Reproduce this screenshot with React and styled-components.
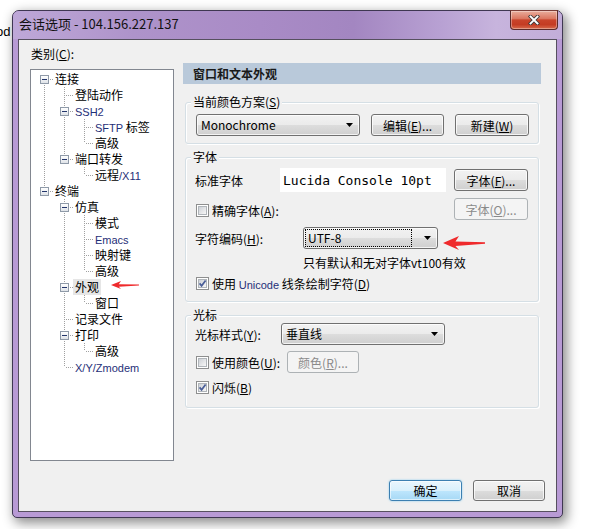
import React from 'react';
import styled, { createGlobalStyle, css } from 'styled-components';

const Global = createGlobalStyle`
  html, body { margin: 0; padding: 0; background: #fff; }
  body {
    font-family: "Noto Sans CJK SC", "Liberation Sans", sans-serif;
    font-size: 12px;
    color: #000;
  }
  * { box-sizing: border-box; }
`;

const Desktop = styled.div`
  position: relative;
  width: 590px;
  height: 529px;
  overflow: hidden;
  padding: 10px 0 0 12px;
`;

const BehindText = styled.span`
  position: absolute;
  left: -4px;
  top: 24px;
  font-family: "Liberation Sans", sans-serif;
  font-size: 13px;
  line-height: 15px;
`;

const Window = styled.div`
  position: relative;
  width: 551px;
  height: 508px;
  display: flex;
  flex-direction: column;
  border: 1px solid #3f3752;
  border-radius: 7px 7px 5px 5px;
  background: #b89ad5;
  padding: 0 5px 5px;
  box-shadow: 3px 4px 12px 1px rgba(0, 0, 0, 0.45);
`;

const TitleBar = styled.div`
  height: 28px;
  margin: 0 -5px;
  padding: 0 4px 0 6px;
  display: flex;
  align-items: flex-start;
  border-radius: 6px 6px 0 0;
  background: linear-gradient(90deg, #bea8d8 0%, #ae93ca 22%, #a98bc6 45%, #a386c1 62%, #b8a1d3 78%, #c7b4dd 88%, #c2add9 100%);
`;

const Title = styled.div`
  padding-top: 5px;
  line-height: 16px;
  font-size: 13px;
  color: #111;
`;

const CloseBtn = styled.div`
  margin: -1px 0 0 auto;
  width: 48px;
  height: 20px;
  border: 1px solid #5a2b2a;
  border-top-color: #7a3d38;
  border-radius: 0 0 4px 4px;
  background: linear-gradient(#e9ae9d 0%, #db7761 42%, #c9442b 50%, #c43c23 75%, #d76a4c 100%);
  box-shadow: inset 0 0 0 1px rgba(255, 255, 255, 0.35);
  display: flex;
  align-items: center;
  justify-content: center;
`;

const Client = styled.div`
  flex: 1;
  display: flex;
  flex-direction: column;
  background: #f0f0f0;
  border: 1px solid #56505f;
`;

const Main = styled.div`
  display: flex;
  gap: 9px;
  padding: 0 15px 0 11px;
`;

const LeftCol = styled.div`
  width: 144px;
  flex: none;
  padding-top: 6px;
  display: flex;
  flex-direction: column;
`;

const CatLabel = styled.div`
  line-height: 16px;
  padding-left: 1px;
`;

const Tree = styled.div`
  margin-top: 7px;
  height: 392px;
  border: 1px solid #828790;
  background: #fff;
  padding: 1px 0 0 3px;
`;

const dots = (dir, x, y, w, h) =>
  `repeating-linear-gradient(${dir}, #a0a0a0 0 1px, transparent 1px 2px) ${x} ${y} / ${w} ${h} no-repeat`;

const TreeRow = styled.div`
  display: flex;
  align-items: center;
  height: 16px;
  white-space: nowrap;
`;

const Guide = styled.span`
  flex: 0 0 20px;
  height: 16px;
  background: ${(p) => (p.$line ? dots('to bottom', '10px', '0', '1px', '16px') : 'none')};
`;

const Conn = styled.span`
  flex: 0 0 19px;
  height: 16px;
  display: flex;
  align-items: flex-start;
  padding: 4px 0 0 6px;
  background: ${(p) =>
    [
      p.$top && dots('to bottom', '10px', '0', '1px', '8px'),
      p.$bottom && dots('to bottom', '10px', '8px', '1px', '8px'),
      dots('to right', '12px', '8px', '7px', '1px'),
    ]
      .filter(Boolean)
      .join(', ')};
`;

const Expander = styled.span`
  width: 9px;
  height: 9px;
  border: 1px solid #8f9aa8;
  background: linear-gradient(#ffffff, #dfe3e8);
  display: flex;
  align-items: center;
  justify-content: center;
  &::before {
    content: '';
    width: 5px;
    height: 1px;
    background: #23356b;
  }
`;

const NodeLabel = styled.span`
  padding: 0 2px;
  height: 16px;
  line-height: 16px;
  background: ${(p) => (p.$sel ? '#e6e6e6' : 'transparent')};
`;

const Latin = styled.span`
  color: #1f2f78;
  font-family: "Liberation Sans", sans-serif;
  font-size: 11px;
`;

const ArrowSvg = styled.svg`
  flex: none;
  display: block;
  margin: ${(p) => p.$m || 0};
`;

const RightCol = styled.div`
  width: 358px;
  flex: none;
  padding-top: 23px;
`;

const Header = styled.div`
  height: 21px;
  line-height: 21px;
  padding-left: 10px;
  background: #b9c9da;
  font-weight: bold;
  color: #1a1a1a;
`;

const Group = styled.div`
  margin: ${(p) => p.$mt}px 2px 0;
  border: 1px solid #d5dfe5;
  border-radius: 3px;
  box-shadow: inset 1px 1px 0 #fff, 1px 1px 0 #fff;
`;

const Legend = styled.div`
  width: fit-content;
  margin: -9px 0 0 5px;
  padding: 0 2px;
  line-height: 16px;
  background: #f0f0f0;
`;

const GroupBody = styled.div`
  display: flex;
  flex-direction: ${(p) => p.$dir || 'column'};
  gap: ${(p) => p.$gap || 0}px;
  padding: ${(p) => p.$pad};
`;

const FormRow = styled.div`
  display: flex;
  align-items: ${(p) => p.$align || 'center'};
  height: ${(p) => p.$h}px;
  margin-top: ${(p) => p.$mt || 0}px;
  padding-left: ${(p) => p.$pl || 0}px;
  white-space: nowrap;
`;

const FieldLabel = styled.span`
  flex: none;
  width: ${(p) => p.$w}px;
`;

const btnFace = css`
  border: 1px solid #707070;
  border-radius: 3px;
  background: linear-gradient(#f2f2f2 0%, #ebebeb 50%, #dddddd 50%, #cfcfcf 100%);
  box-shadow: inset 0 0 0 1px rgba(255, 255, 255, 0.75);
`;

const Button = styled.button`
  font: inherit;
  color: #000;
  flex: none;
  width: ${(p) => p.$w}px;
  height: ${(p) => p.$h || 22}px;
  margin-left: ${(p) => (p.$auto ? 'auto' : '0')};
  padding: 0;
  display: flex;
  align-items: center;
  justify-content: center;
  ${btnFace}
  ${(p) =>
    p.$primary &&
    css`
      border-color: #3c7fb1;
      background: linear-gradient(#eaf6fd 0%, #d9f0fc 50%, #bee6fd 50%, #a7d9f5 100%);
      box-shadow: inset 0 0 0 1px rgba(255, 255, 255, 0.6), 0 0 2px #7cc7ee;
    `}
  &:disabled {
    color: #8a8a8a;
    border-color: #adb2b5;
    background: #f4f4f4;
    box-shadow: none;
  }
`;

const Select = styled.div`
  flex: none;
  width: ${(p) => p.$w}px;
  height: 22px;
  display: flex;
  align-items: center;
  padding: 0 6px 0 1px;
  ${btnFace}
`;

const SelectText = styled.span`
  flex: 1;
  height: 18px;
  line-height: 16px;
  padding-left: 2px;
  margin-right: ${(p) => (p.$focus ? 12 : 4)}px;
  border: 1px ${(p) => (p.$focus ? 'dotted #000' : 'solid transparent')};
`;

const FontBox = styled.div`
  flex: none;
  width: 166px;
  height: 24px;
  background: #fff;
  padding-left: 3px;
  display: flex;
  align-items: center;
  font-family: "DejaVu Sans Mono", "Liberation Mono", monospace;
  font-size: 13px;
`;

const CheckField = styled.label`
  display: flex;
  align-items: center;
  gap: 3px;
  flex: none;
  width: ${(p) => (p.$w ? `${p.$w}px` : 'auto')};
  margin: 0 0 ${(p) => p.$mb || 0}px 1px;
`;

const Box = styled.span`
  flex: none;
  width: 13px;
  height: 13px;
  border: 1px solid #8e8f8f;
  background: #fff;
  padding: 1px;
  display: flex;
`;

const BoxInner = styled.span`
  flex: 1;
  display: flex;
  border: 1px solid #b0b5ba;
  background: linear-gradient(135deg, #cdd1d6 0%, #e7e8ea 60%, #f7f7f7 100%);
  & > svg {
    margin: -1px;
    flex: none;
  }
`;

const Hint = styled.span``;

const Footer = styled.div`
  margin-top: auto;
  display: flex;
  justify-content: flex-end;
  gap: 11px;
  padding: 0 11px 10px 0;
`;

const Caret = () => (
  <svg width="7" height="4" viewBox="0 0 7 4" style={{ flex: 'none' }}>
    <path d="M0 0 H7 L3.5 4 Z" fill="#000" />
  </svg>
);

const RedArrow = ({ w, h, head, m }) => {
  const c = h / 2;
  return (
    <ArrowSvg width={w} height={h} viewBox={`0 0 ${w} ${h}`} $m={m}>
      <path
        d={`M0 ${c} L${head} 0 L${head * 0.78} ${c - h * 0.1} L${w} ${c - h * 0.06} L${w} ${c + h * 0.06} L${head * 0.78} ${c + h * 0.22} L${head} ${h} Z`}
        fill="#ef2a2c"
      />
    </ArrowSvg>
  );
};

const Check = ({ checked }) => (
  <Box>
    <BoxInner>
      {checked && (
        <svg width="9" height="9" viewBox="0 0 9 9">
          <path d="M1.6 4.4 L3.6 6.8 L7.6 1.4" fill="none" stroke="#4a5e98" strokeWidth="1.7" />
        </svg>
      )}
    </BoxInner>
  </Box>
);

const withLatin = (s) =>
  s.split(/([A-Za-z0-9/]+)/).map((part, i) =>
    /[A-Za-z0-9]/.test(part) ? <Latin key={i}>{part}</Latin> : <React.Fragment key={i}>{part}</React.Fragment>
  );

const items = [
  { l: 0, t: '连接', exp: true },
  { l: 1, t: '登陆动作' },
  { l: 1, t: 'SSH2', exp: true },
  { l: 2, t: 'SFTP 标签' },
  { l: 2, t: '高级' },
  { l: 1, t: '端口转发', exp: true },
  { l: 2, t: '远程/X11' },
  { l: 0, t: '终端', exp: true },
  { l: 1, t: '仿真', exp: true },
  { l: 2, t: '模式' },
  { l: 2, t: 'Emacs' },
  { l: 2, t: '映射键' },
  { l: 2, t: '高级' },
  { l: 1, t: '外观', exp: true, sel: true, arrow: true },
  { l: 2, t: '窗口' },
  { l: 1, t: '记录文件' },
  { l: 1, t: '打印', exp: true },
  { l: 2, t: '高级' },
  { l: 1, t: 'X/Y/Zmodem' },
];

const hasNext = (i) => {
  const L = items[i].l;
  for (let j = i + 1; j < items.length; j++) {
    if (items[j].l < L) return false;
    if (items[j].l === L) return true;
  }
  return false;
};

const ancestorAt = (i, k) => {
  for (let j = i - 1; j >= 0; j--) if (items[j].l === k) return j;
  return -1;
};

const CategoryTree = () => (
  <Tree>
    {items.map((it, i) => {
      const guides = [];
      for (let k = 0; k < it.l; k++) {
        const a = ancestorAt(i, k);
        guides.push(<Guide key={k} $line={a >= 0 && hasNext(a)} />);
      }
      return (
        <TreeRow key={i}>
          {guides}
          <Conn $top={i !== 0} $bottom={hasNext(i)}>
            {it.exp && <Expander />}
          </Conn>
          <NodeLabel $sel={it.sel}>{withLatin(it.t)}</NodeLabel>
          {it.arrow && <RedArrow w={28} h={8} head={10} m="0 0 5px 10px" />}
        </TreeRow>
      );
    })}
  </Tree>
);

export default function App() {
  return (
    <Desktop>
      <Global />
      <BehindText>od</BehindText>
      <Window>
        <TitleBar>
          <Title>会话选项 - 104.156.227.137</Title>
          <CloseBtn>
            <svg width="12" height="10" viewBox="0 0 12 10">
              <path d="M2.5 1.5 L9.5 8.5 M9.5 1.5 L2.5 8.5" stroke="#3a3a3a" strokeWidth="3.6" strokeLinecap="square" />
              <path d="M2.5 1.5 L9.5 8.5 M9.5 1.5 L2.5 8.5" stroke="#fff" strokeWidth="1.9" strokeLinecap="square" />
            </svg>
          </CloseBtn>
        </TitleBar>
        <Client>
          <Main>
            <LeftCol>
              <CatLabel>
                类别(<u>C</u>):
              </CatLabel>
              <CategoryTree />
            </LeftCol>
            <RightCol>
              <Header>窗口和文本外观</Header>

              <Group $mt={18}>
                <Legend>
                  当前颜色方案(<u>S</u>)
                </Legend>
                <GroupBody $dir="row" $gap={11} $pad="4px 10px 7px 10px">
                  <Select $w={164}>
                    <SelectText>Monochrome</SelectText>
                    <Caret />
                  </Select>
                  <Button $w={73}>
                    编辑(<u>E</u>)...
                  </Button>
                  <Button $w={74}>
                    新建(<u>W</u>)
                  </Button>
                </GroupBody>
              </Group>

              <Group $mt={13}>
                <Legend>字体</Legend>
                <GroupBody $pad="3px 10px 10px 9px">
                  <FormRow $h={24}>
                    <FieldLabel $w={85}>标准字体</FieldLabel>
                    <FontBox>Lucida Console 10pt</FontBox>
                    <Button $w={74} $auto>
                      字体(<u>F</u>)...
                    </Button>
                  </FormRow>
                  <FormRow $h={22} $mt={6} $align="flex-end">
                    <CheckField $mb={1}>
                      <Check />
                      <span>
                        精确字体(<u>A</u>):
                      </span>
                    </CheckField>
                    <Button $w={74} $auto disabled>
                      字体(<u>O</u>)...
                    </Button>
                  </FormRow>
                  <FormRow $h={22} $mt={7}>
                    <FieldLabel $w={108}>
                      字符编码(<u>H</u>):
                    </FieldLabel>
                    <Select $w={135}>
                      <SelectText $focus>UTF-8</SelectText>
                      <Caret />
                    </Select>
                    <RedArrow w={42} h={14} head={16} m="9px 0 0 5px" />
                  </FormRow>
                  <FormRow $h={16} $mt={5} $pl={108}>
                    <Hint>只有默认和无对字体vt100有效</Hint>
                  </FormRow>
                  <FormRow $h={16} $mt={5}>
                    <CheckField>
                      <Check checked />
                      <span>
                        使用 <Latin>Unicode</Latin> 线条绘制字符(<u>D</u>)
                      </span>
                    </CheckField>
                  </FormRow>
                </GroupBody>
              </Group>

              <Group $mt={13}>
                <Legend>光标</Legend>
                <GroupBody $pad="0 10px 12px 9px">
                  <FormRow $h={22}>
                    <FieldLabel $w={86}>
                      光标样式(<u>Y</u>):
                    </FieldLabel>
                    <Select $w={164}>
                      <SelectText>垂直线</SelectText>
                      <Caret />
                    </Select>
                  </FormRow>
                  <FormRow $h={22} $mt={6}>
                    <CheckField $w={91}>
                      <Check />
                      <span>
                        使用颜色(<u>U</u>):
                      </span>
                    </CheckField>
                    <Button $w={72} disabled>
                      颜色(<u>R</u>)...
                    </Button>
                  </FormRow>
                  <FormRow $h={16} $mt={6}>
                    <CheckField>
                      <Check checked />
                      <span>
                        闪烁(<u>B</u>)
                      </span>
                    </CheckField>
                  </FormRow>
                </GroupBody>
              </Group>
            </RightCol>
          </Main>
          <Footer>
            <Button $w={73} $h={21} $primary>
              确定
            </Button>
            <Button $w={72} $h={21}>
              取消
            </Button>
          </Footer>
        </Client>
      </Window>
    </Desktop>
  );
}
